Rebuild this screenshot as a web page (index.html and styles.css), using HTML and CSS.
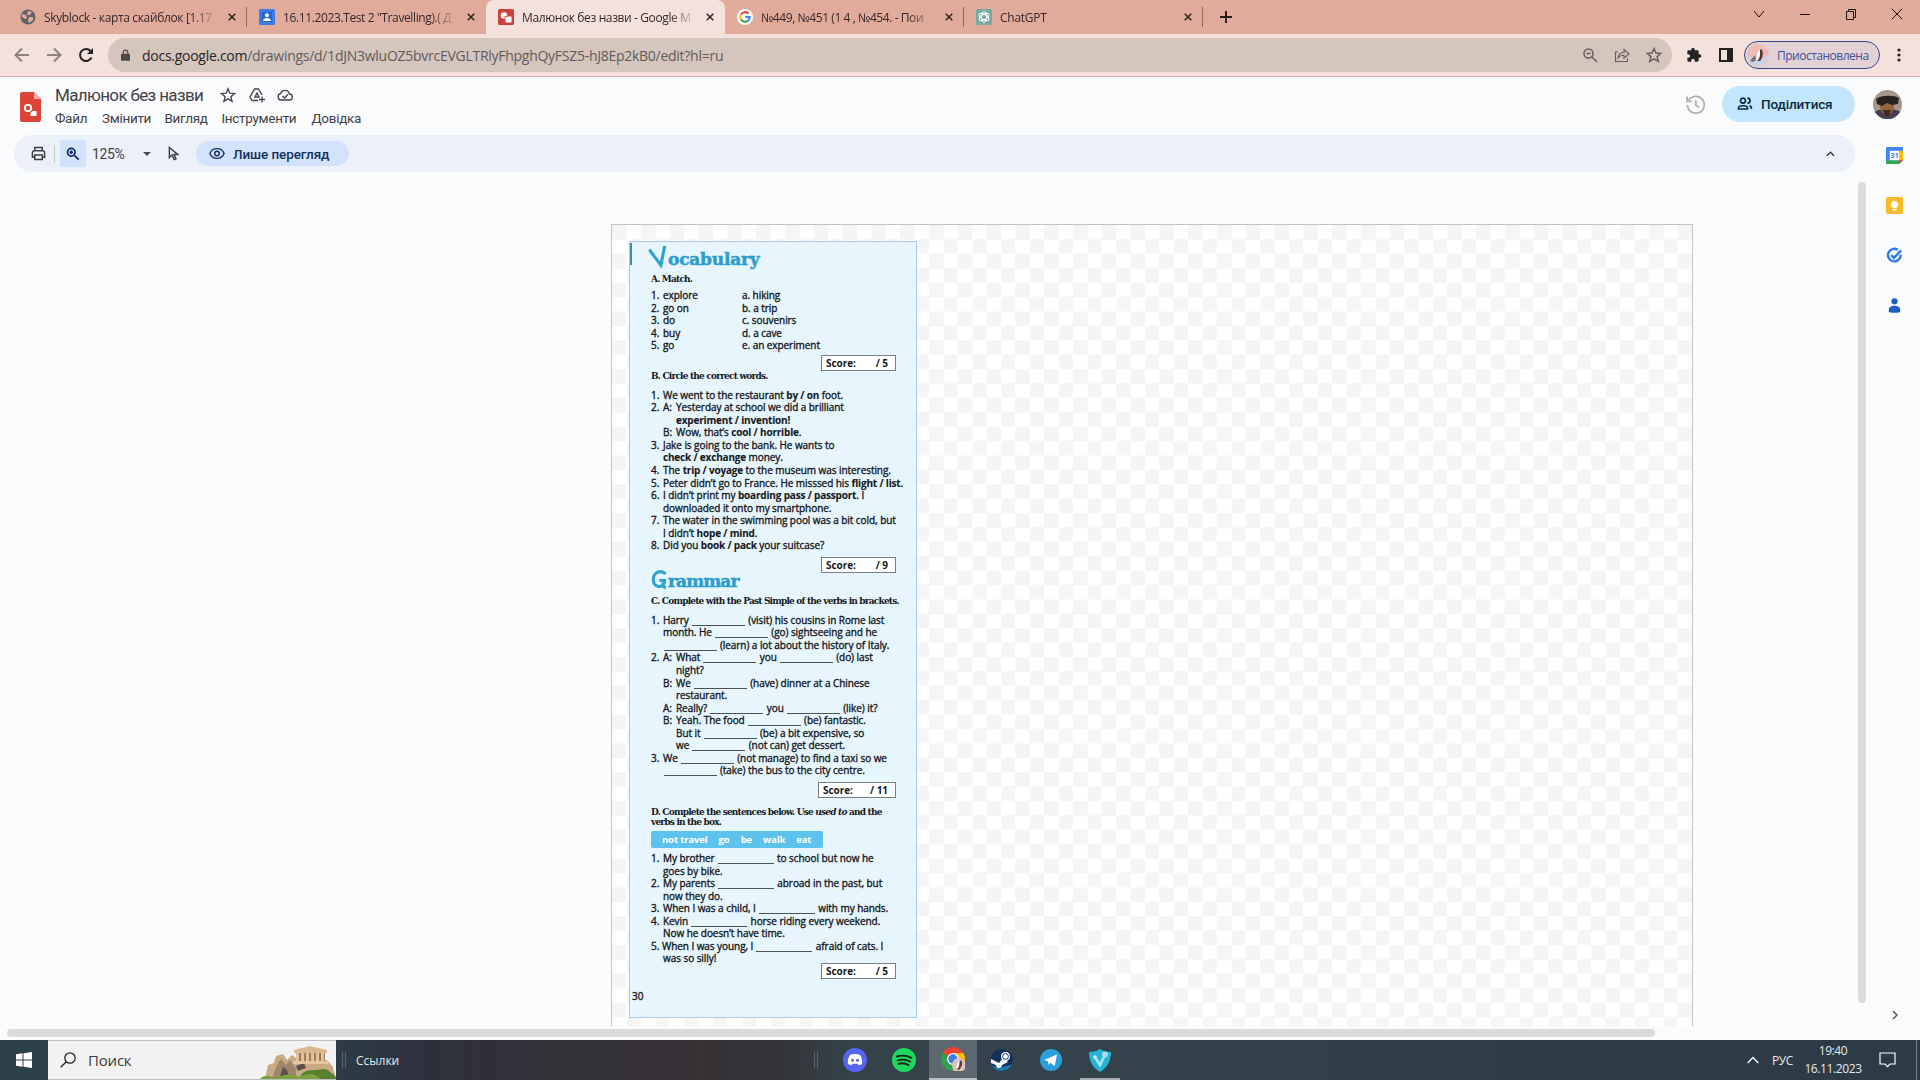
FILE: index.html
```
<!DOCTYPE html>
<html lang="uk">
<head>
    <meta charset="UTF-8">
    <title>Малюнок без назви - Google Малюнки</title>
    <link rel="stylesheet" href="styles.css">
</head>
<body>
    <!-- Browser tabs -->
    <div class="tabs">
        <div class="tab">
            <svg class="favicon" viewBox="0 0 16 16"><circle cx="8" cy="8" r="7.5" fill="#5f6368"/><path d="M2 5l4 1 1 3-2 1-3-2zM8 2l4 1-2 3-3 0zM9 8l4 0 0 3-4 3-1-3z" fill="#e1ab9b"/></svg>
            <span class="tab-title t1">Skyblock - карта скайблок [1.17</span>
            <svg class="close" viewBox="0 0 8 8"><path d="M.7.7l6.6 6.6M7.3.7L.7 7.3"/></svg>
        </div>
        <div class="tab no-sep">
            <svg class="favicon" viewBox="0 0 16 16"><rect width="16" height="16" rx="1.5" fill="#3b7de8"/><rect x="3" y="3" width="10" height="10" fill="#2465cf"/><circle cx="8" cy="6.2" r="2" fill="#fff"/><path d="M4 12c0-4 8-4 8 0z" fill="#fff"/></svg>
            <span class="tab-title t2">16.11.2023.Test 2 "Travelling).( Д</span>
            <svg class="close" viewBox="0 0 8 8"><path d="M.7.7l6.6 6.6M7.3.7L.7 7.3"/></svg>
        </div>
        <div class="tab active">
            <svg class="favicon" viewBox="0 0 16 16"><rect width="16" height="16" rx="1.5" fill="#d0403b"/><circle cx="6" cy="6.5" r="3.3" fill="#fff"/><rect x="7.5" y="7.5" width="6" height="6" fill="#fff"/><path d="M6 8h3v-2" fill="none" stroke="#d0403b"/></svg>
            <span class="tab-title t3">Малюнок без назви - Google М</span>
            <svg class="close" viewBox="0 0 8 8"><path d="M.7.7l6.6 6.6M7.3.7L.7 7.3"/></svg>
        </div>
        <div class="tab">
            <svg class="favicon" viewBox="0 0 16 16"><circle cx="8" cy="8" r="8" fill="#fff"/><g fill="none" stroke-width="2.1"><path d="M11.5 4.6A4.7 4.7 0 0 0 4 5.6" stroke="#ea4335"/><path d="M4 5.6a4.7 4.7 0 0 0 0 4.8" stroke="#fbbc05"/><path d="M4 10.4a4.7 4.7 0 0 0 7 1.3" stroke="#34a853"/><path d="M11 11.7c1.3-1 1.7-2.2 1.7-3.7H8.2" stroke="#4285f4"/></g></svg>
            <span class="tab-title t4">№449, №451 (1 4 , №454. - Пои</span>
            <svg class="close" viewBox="0 0 8 8"><path d="M.7.7l6.6 6.6M7.3.7L.7 7.3"/></svg>
        </div>
        <div class="tab">
            <svg class="favicon" viewBox="0 0 16 16"><rect width="16" height="16" rx="1.5" fill="#75a99c"/><g fill="none" stroke="#fff" stroke-width=".9"><ellipse cx="8" cy="8" rx="2.6" ry="5.5"/><ellipse cx="8" cy="8" rx="2.6" ry="5.5" transform="rotate(60 8 8)"/><ellipse cx="8" cy="8" rx="2.6" ry="5.5" transform="rotate(120 8 8)"/></g></svg>
            <span class="tab-title t5">ChatGPT</span>
            <svg class="close" viewBox="0 0 8 8"><path d="M.7.7l6.6 6.6M7.3.7L.7 7.3"/></svg>
        </div>
        <svg class="plus" viewBox="0 0 12 12"><path d="M6 0v12M0 6h12"/></svg>
        <div class="window-buttons">
            <svg viewBox="0 0 12 12"><path d="M1 3l5 6 5-6"/></svg>
            <svg viewBox="0 0 12 12"><path d="M1 6.5h10"/></svg>
            <svg viewBox="0 0 12 12"><path d="M1.500 3.500h7v8h-7zM3.500 3.500v-2h7v8h-2"/></svg>
            <svg viewBox="0 0 12 12"><path d="M.8.8l10.400 10.400M11.200.8L.8 11.200"/></svg>
        </div>
    </div>

    <!-- Address bar -->
    <div class="toolbar">
        <svg class="nav dim" viewBox="0 0 16 16"><path d="M15 8H2M8 1.500L1.500 8 8 14.500"/></svg>
        <svg class="nav dim" viewBox="0 0 16 16"><path d="M1 8h13M8 1.500L14.500 8 8 14.500"/></svg>
        <svg class="nav" viewBox="0 0 16 16"><path d="M13.500 10.500a6 6 0 1 1-1-6.500"/><path d="M15 1v6H9z" fill="#222" stroke="none"/></svg>
        <div class="omnibox">
            <svg class="lock" viewBox="0 0 10 13"><rect y="5" width="10" height="8" rx="1" fill="#4c4845"/><path d="M2.500 5V3.500a2.500 2.500 0 0 1 5 0V5" fill="none" stroke="#4c4845" stroke-width="1.400"/></svg>
            <span class="url"><b>docs.google.com</b>/drawings/d/1dJN3wluOZ5bvrcEVGLTRlyFhpghQyFSZ5-hJ8Ep2kB0/edit?hl=ru</span>
            <svg class="omni-icon" viewBox="0 0 16 16"><circle cx="6.500" cy="6.500" r="4.500"/><path d="M10 10l5 5M4.500 6.500h4"/></svg>
            <svg class="omni-icon thin" viewBox="0 0 16 16"><path d="M4 5H1.500v9.500h12V11M4 11c.5-4 3-5.500 6-5.500v-3L15 7l-5 4V8.300c-3 0-4.500.7-6 2.700z"/></svg>
            <svg class="omni-icon" viewBox="0 0 16 16"><path d="M8 1.500l2 4.500 4.800.4-3.700 3.200 1.200 4.800L8 11.800l-4.300 2.600 1.200-4.800L1.200 6.400 6 6z"/></svg>
        </div>
        <svg class="puzzle" viewBox="0 0 24 24"><path d="M20.500 11H19V7c0-1.100-.9-2-2-2h-4V3.500a2.500 2.500 0 0 0-5 0V5H4c-1.100 0-2 .9-2 2v3.800h1.500a2.700 2.700 0 0 1 0 5.400H2V20c0 1.100.9 2 2 2h3.800v-1.500a2.700 2.700 0 0 1 5.400 0V22H17c1.100 0 2-.9 2-2v-4h1.500a2.500 2.500 0 0 0 0-5z"/></svg>
        <svg class="panel" viewBox="0 0 14 14"><path d="M0 0h14v14H0zM2 2v10h6V2z" fill="#222" fill-rule="evenodd"/></svg>
        <div class="profile">
            <svg viewBox="0 0 22 22"><circle cx="11" cy="11" r="11" fill="#eebbb5"/><path d="M0 11a11 11 0 0 0 22 0c-6 3-14 6-22 0z" fill="#c9d3e2"/><path d="M3 17l5-6 1 5-3 2z" fill="#77716f"/><path d="M10 17c4-3 1-10 4-12 3 2 2 9-1 12z" fill="#4b3835"/><path d="M9 16c1-4 1-8 4-10 0 4 0 8-2 10z" fill="#fff"/></svg>
            <span>Приостановлена</span>
        </div>
        <svg class="dots" viewBox="0 0 4 14"><circle cx="2" cy="2" r="1.600"/><circle cx="2" cy="7" r="1.600"/><circle cx="2" cy="12" r="1.600"/></svg>
    </div>

    <!-- Document header -->
    <div class="doc-header">
        <svg class="doc-logo" viewBox="0 0 21 30"><path d="M2 0h12l7 7v21a2 2 0 0 1-2 2H2a2 2 0 0 1-2-2V2a2 2 0 0 1 2-2z" fill="#db4437"/><path d="M14 0l7 7h-7z" fill="#f2a8a1"/><circle cx="8" cy="16" r="3.200" fill="none" stroke="#fff" stroke-width="1.800"/><path d="M10.500 24v-3l2-2h4v5z" fill="#fff"/></svg>
        <div class="doc-info">
            <div class="doc-title">
                <h1>Малюнок без назви</h1>
                <svg viewBox="0 0 16 16"><path d="M8 1.800l1.800 4.400 4.700.4-3.600 3.100 1.100 4.600L8 11.800l-4 2.500 1.100-4.600-3.600-3.100 4.700-.4z"/></svg>
                <svg viewBox="0 0 16 16"><path d="M9 13.500H3.200L1 10l4.500-8h4L13 8M6 10l2-4 2 4zM13 9.500v6M10 12.500h6"/></svg>
                <svg viewBox="0 0 16 16"><path d="M4 13a3.300 3.300 0 0 1-.3-6.500 4.500 4.500 0 0 1 8.700.5 3 3 0 0 1 0 6zM5.500 9l2 2 3.300-3.500"/></svg>
            </div>
            <div class="menu">
                <span class="m1">Файл</span><span class="m2">Змінити</span><span class="m3">Вигляд</span><span class="m4">Інструменти</span><span>Довідка</span>
            </div>
        </div>
        <svg class="history" viewBox="0 0 18 18"><path d="M2.500 5a8 8 0 1 1-1.200 4.500M1 1.500V6h4.500M9.300 5v4.500l3.200 2.500"/></svg>
        <div class="share">
            <svg viewBox="0 0 16 16"><path d="M6 2.200a2.500 2.500 0 1 0 .01 0M1.500 13v-1c0-3 9-3 9 0v1zM10.500 2.200a2.500 2.500 0 0 1 0 5M12.500 9.500c2 .8 2 2 2 3.500" /></svg>
            <span>Поділитися</span>
        </div>
        <svg class="avatar" viewBox="0 0 29 29"><circle cx="14.500" cy="14.500" r="14.500" fill="#a69789"/><path d="M2 22c3-4 22-4 25 0a14.500 14.500 0 0 1-25 0z" fill="#453f52"/><ellipse cx="14" cy="16" rx="7" ry="9" fill="#96633f"/><path d="M3 9c5-4 18-4 23-1l-1 6-6 1-5-2-5 3-5-2z" fill="#28231f"/><path d="M10 20h8l-2 6h-4z" fill="#3a2a23"/></svg>
    </div>

    <div class="workspace">
        <div class="main">
            <div class="tools">
                <svg class="print" viewBox="0 0 16 16"><path d="M4 5V1.500h8V5M4 12H1.500V7c0-1 .7-2 2-2h9c1.300 0 2 1 2 2v5H12M4 9.500h8v5H4z"/></svg>
                <div class="divider"></div>
                <div class="zoom-tool"><svg viewBox="0 0 16 16"><circle cx="6" cy="6" r="4.300"/><path d="M9.500 9.500l5 5M4 6h4M6 4v4"/></svg></div>
                <span class="percent">125%</span>
                <div class="caret"></div>
                <svg class="cursor" viewBox="0 0 12 16"><path d="M1.500 1.500v11l3-2.800 2.200 5 2-.9-2.200-4.800H10.500z"/></svg>
                <div class="view-only">
                    <svg viewBox="0 0 18 14"><path d="M1 7c3-7.300 13-7.300 16 0-3 7.300-13 7.300-16 0z"/><circle cx="9" cy="7" r="2.600"/></svg>
                    <span>Лише перегляд</span>
                </div>
                <svg class="collapse" viewBox="0 0 10 6"><path d="M1 5l4-4 4 4"/></svg>
            </div>
            <div class="canvas-row">
                <div class="canvas">
                    <div class="sheet">
                        <div class="heading vocab"><svg viewBox="0 0 20 24"><path d="M1 5l12 16L17 1" /></svg><span>ocabulary</span></div>
                        <h4 class="a">A. Match.</h4>
                        <ol class="match">
                            <li><i>1.</i><span>explore</span><em>a. hiking</em></li>
                            <li><i>2.</i><span>go on</span><em>b. a trip</em></li>
                            <li><i>3.</i><span>do</span><em>c. souvenirs</em></li>
                            <li><i>4.</i><span>buy</span><em>d. a cave</em></li>
                            <li><i>5.</i><span>go</span><em>e. an experiment</em></li>
                        </ol>
                        <div class="score">Score:<span>/ 5</span></div>
                        <h4 class="b">B. Circle the correct words.</h4>
                        <ol>
                            <li><i>1.</i>We went to the restaurant <b>by / on</b> foot.</li>
                            <li><i>2.</i><u>A:</u>Yesterday at school we did a brilliant</li>
                            <li><i></i><u></u><b>experiment / invention!</b></li>
                            <li><i></i><u>B:</u>Wow, that’s <b>cool / horrible</b>.</li>
                            <li><i>3.</i>Jake is going to the bank. He wants to</li>
                            <li><i></i><b>check / exchange</b> money.</li>
                            <li><i>4.</i>The <b>trip / voyage</b> to the museum was interesting.</li>
                            <li><i>5.</i>Peter didn’t go to France. He misssed his <b>flight / list</b>.</li>
                            <li><i>6.</i>I didn’t print my <b>boarding pass / passport</b>. I</li>
                            <li><i></i>downloaded it onto my smartphone.</li>
                            <li><i>7.</i>The water in the swimming pool was a bit cold, but</li>
                            <li><i></i>I didn’t <b>hope / mind</b>.</li>
                            <li><i>8.</i>Did you <b>book / pack</b> your suitcase?</li>
                        </ol>
                        <div class="score s2">Score:<span>/ 9</span></div>
                        <div class="heading gram"><svg viewBox="0 0 17 21"><path d="M15 4C9-1 2 3 2 10s6 9 10 6c2-1.500 2-3 2-5H8.500M12 13c0 3 1 5 3 6" /></svg><span>rammar</span></div>
                        <h4 class="c">C. Complete with the Past Simple of the verbs in brackets.</h4>
                        <ol>
                            <li><i>1.</i>Harry <s></s> (visit) his cousins in Rome last</li>
                            <li><i></i>month. He <s></s> (go) sightseeing and he</li>
                            <li><i></i><s></s> (learn) a lot about the history of Italy.</li>
                            <li><i>2.</i><u>A:</u>What <s></s> you <s></s> (do) last</li>
                            <li><i></i><u></u>night?</li>
                            <li><i></i><u>B:</u>We <s></s> (have) dinner at a Chinese</li>
                            <li><i></i><u></u>restaurant.</li>
                            <li><i></i><u>A:</u>Really? <s></s> you <s></s> (like) it?</li>
                            <li><i></i><u>B:</u>Yeah. The food <s></s> (be) fantastic.</li>
                            <li><i></i><u></u>But it <s></s> (be) a bit expensive, so</li>
                            <li><i></i><u></u>we <s></s> (not can) get dessert.</li>
                            <li><i>3.</i>We <s></s> (not manage) to find a taxi so we</li>
                            <li><i></i><s></s> (take) the bus to the city centre.</li>
                        </ol>
                        <div class="score s3">Score:<span>/ 11</span></div>
                        <h4 class="d">D. Complete the sentences below. Use <em>used to</em> and the<br>verbs in the box.</h4>
                        <div class="words"><span>not travel</span><span>go</span><span>be</span><span>walk</span><span>eat</span></div>
                        <ol class="wide">
                            <li><i>1.</i>My brother <s></s> to school but now he</li>
                            <li><i></i>goes by bike.</li>
                            <li><i>2.</i>My parents <s></s> abroad in the past, but</li>
                            <li><i></i>now they do.</li>
                            <li><i>3.</i>When I was a child, I <s></s> with my hands.</li>
                            <li><i>4.</i>Kevin <s></s> horse riding every weekend.</li>
                            <li><i></i>Now he doesn’t have time.</li>
                            <li><i class="tight">5.</i>When I was young, I <s></s> afraid of cats. I</li>
                            <li><i></i>was so silly!</li>
                        </ol>
                        <div class="score s4">Score:<span>/ 5</span></div>
                        <div class="page-number">30</div>
                    </div>
                </div>
                <div class="v-scroll"></div>
            </div>
            <div class="h-scroll"></div>
        </div>
        <div class="side">
            <svg viewBox="0 0 18 18"><path d="M1 0h16a1 1 0 0 1 1 1v13l-4 4H1a1 1 0 0 1-1-1V1a1 1 0 0 1 1-1z" fill="#4285f4"/><path d="M14 4h4v10h-4z" fill="#fbbc04"/><path d="M0 14h14v4H1a1 1 0 0 1-1-1z" fill="#34a853"/><path d="M14 14h4l-4 4z" fill="#ea4335"/><path d="M4 4h10v10H4z" fill="#fff"/><text x="9" y="12" text-anchor="middle">31</text></svg>
            <svg viewBox="0 0 18 18"><rect width="18" height="18" rx="2" fill="#f5ba2b"/><circle cx="9" cy="8" r="3.800" fill="#fff"/><path d="M7 12.500h4v1.800H7z" fill="#fff"/></svg>
            <svg viewBox="0 0 18 18"><path d="M15.500 8a6.700 6.700 0 1 1-3-5M5.500 8.500l3 3L16 3.500" fill="none" stroke="#2d7be5" stroke-width="2.600"/></svg>
            <svg viewBox="0 0 18 18"><circle cx="9" cy="4.500" r="3.300" fill="#1a5fc4"/><path d="M3 16v-3c0-5 12-5 12 0v3c0 1-12 1-12 0z" fill="#1a5fc4"/></svg>
            <svg class="expand" viewBox="0 0 6 10"><path d="M1 1l4 4-4 4"/></svg>
        </div>
    </div>

    <!-- Windows taskbar -->
    <div class="taskbar">
        <div class="start"><svg viewBox="0 0 16 16"><path d="M0 2.200L6.500 1.300V7.500H0zM7.500 1.200L16 0v7.500H7.500zM0 8.500h6.500v6.200L0 13.800zM7.500 8.500H16V16l-8.500-1.200z"/></svg></div>
        <div class="search">
            <svg class="glass" viewBox="0 0 16 16"><circle cx="10" cy="6" r="5.200"/><path d="M6.300 9.700L.7 15.300"/></svg>
            <span>Поиск</span>
            <svg class="ruins" viewBox="0 0 76 33"><path d="M5 33l3-14 6-2 2-7 7-2 4 6 5-5 5 4 30 1 6 7 3 12z" fill="#c9aa84"/><path d="M12 33l4-12 5-8 5 6 4-5 6 9v10z" fill="#9d866c"/><path d="M20 30l3-9 4 3 2 6zM36 20l8-3 2 5-8 3z" fill="#5e5148"/><path d="M36 7h29v9H36z" fill="#9a7a58"/><path d="M34 4L50 0l17 4v3H34z" fill="#d8b992"/><path d="M36 7h3v9h-3zM41 7h3v9h-3zM46 7h3v9h-3zM51 7h3v9h-3zM56 7h3v9h-3zM61 7h3v9h-3z" fill="#e0c39b"/><path d="M33 15h35v3H33z" fill="#e2c7a0"/><path d="M40 33c0-6 6-9 13-9 8 0 12-3 16 1s7 3 7 8z" fill="#57802f"/><path d="M0 33c5-6 12-2 17-1 8-5 16-4 23-1 9-5 15-3 21 2z" fill="#7ba13d"/></svg>
        </div>
        <div class="grip"></div>
        <span class="links">Ссылки</span>
        <div class="grip g2"></div>
        <div class="app"><svg viewBox="0 0 24 24"><circle cx="12" cy="12" r="12" fill="#5865f2"/><path d="M7 7c3-1.200 7-1.200 10 0 2 3 2.500 6 2 9-1 .8-2.500 1.200-3.500 1.200l-.8-1.500h-5.400l-.8 1.500C7.500 17.200 6 16.800 5 16c-.5-3 0-6 2-9z" fill="#fff"/><circle cx="9.500" cy="12.300" r="1.500" fill="#5865f2"/><circle cx="14.500" cy="12.300" r="1.500" fill="#5865f2"/></svg></div>
        <div class="app"><svg viewBox="0 0 24 24"><circle cx="12" cy="12" r="12" fill="#1ed760"/><path d="M5 8.500c5-1.500 10-1 14.500 1.300M5.700 12.300c4.300-1.200 8.500-.8 12.300 1.200M6.300 15.800c3.700-.9 7-.6 10.200 1.200" fill="none" stroke="#14251c" stroke-width="1.900" stroke-linecap="round"/></svg></div>
        <div class="app current"><svg viewBox="0 0 24 24"><path d="M12 12L1.600 6A12 12 0 0 1 22.400 6z" fill="#ea4335"/><path d="M12 12L1.600 6A12 12 0 0 0 12 24z" fill="#2fa04f"/><path d="M12 12V6h10.400A12 12 0 0 1 12 24z" fill="#fbbc05"/><circle cx="12" cy="12" r="6" fill="#fff"/><circle cx="12" cy="12" r="4.700" fill="#3b7ddd"/><circle cx="18" cy="18" r="7" fill="#ddc0ba"/><path d="M16 22c4-2 1-7 4-9 2 3 1 7-2 10z" fill="#4b3835"/><path d="M15 21c1-3 1-5 3-7 0 4 0 5-1 7z" fill="#fff"/></svg></div>
        <div class="app"><svg viewBox="0 0 24 24"><circle cx="12" cy="12" r="11" fill="#12305e"/><path d="M2 17a11 11 0 0 0 20-1c-4 2-14 5-20 1z" fill="#1c78ad"/><path d="M1 11l8 4 4-5 5 4-6 3c0 4-6 4-6 0l-5-2z" fill="#fff"/><circle cx="15.500" cy="8.500" r="4.500" fill="#fff"/><circle cx="15.500" cy="8.500" r="2.900" fill="#fff" stroke="#12305e"/></svg></div>
        <div class="app"><svg viewBox="0 0 24 24"><circle cx="12" cy="12" r="11" fill="#2a9fd9"/><path d="M5 12l13-5.500-2.300 11.500-4.500-3.300L9.500 17l-.7-4z" fill="#fff"/></svg></div>
        <div class="app"><svg viewBox="0 0 24 24"><path d="M1 4c5 0 8-1 11-3 3 2 6 3 11 3 0 9-4 16-11 20C5 20 1 13 1 4z" fill="#25b4d6"/><path d="M7 9l5 8 5-10" fill="none" stroke="#a5e6f2" stroke-width="2.600" stroke-linecap="round"/><circle cx="7" cy="9" r="1.800" fill="#c9f2fa"/><circle cx="17" cy="6.500" r="3" fill="#9de3f0"/></svg><div class="underline"></div></div>
        <div class="tray">
            <svg class="up" viewBox="0 0 12 8"><path d="M.7 7L6 1.500 11.300 7"/></svg>
            <span class="lang">РУС</span>
            <div class="clock"><span>19:40</span><span>16.11.2023</span></div>
            <svg class="notif" viewBox="0 0 17 16"><path d="M1 1h15v11h-5l-2.500 2.700L6 12H1z"/></svg>
        </div>
    </div>
</body>
</html>
```
FILE: styles.css
```
* {
    box-sizing: border-box;
}
body {
    margin: 0;
    width: 1920px;
    height: 1080px;
    overflow: hidden;
    display: flex;
    flex-direction: column;
    font-family: "Open Sans", "Noto Sans", sans-serif;
    background-color: #fafbfd;
    color: #3f4246;
}
svg {
    display: block;
    flex: none;
    fill: none;
}
span {
    white-space: nowrap;
}

/* Tabs */
.tabs {
    height: 34px;
    flex: none;
    display: flex;
    align-items: center;
    padding-left: 8px;
    background-color: #e1ab9b;
}
.tab {
    width: 239px;
    height: 34px;
    display: flex;
    align-items: center;
    padding: 0 11px 0 12px;
    position: relative;
}
.tab::after {
    content: "";
    position: absolute;
    right: 0;
    top: 7px;
    width: 1px;
    height: 20px;
    background-color: #94685f;
}
.no-sep::after, .active::after {
    display: none;
}
.active {
    background-color: #f4e1db;
    border-radius: 8px 8px 0 0;
}
.favicon {
    width: 16px;
    height: 16px;
    margin-right: 8px;
}
.tab-title {
    width: 172px;
    overflow: hidden;
    font-size: 12px;
    color: #37272a;
    -webkit-mask-image: linear-gradient(to right, #000 148px, transparent 174px);
    mask-image: linear-gradient(to right, #000 148px, transparent 174px);
}
.t1 { letter-spacing: -0.35px; }
.t2 { letter-spacing: -0.38px; }
.t3 { letter-spacing: -0.38px; }
.t4 { letter-spacing: -0.42px; }
.t5 { letter-spacing: -0.25px; }
.close {
    width: 8px;
    height: 8px;
    margin-left: auto;
    stroke: #32211f;
    stroke-width: 1.5;
}
.plus {
    width: 12px;
    height: 12px;
    margin-left: 17px;
    stroke: #2b1b18;
    stroke-width: 2;
}
.window-buttons {
    margin-left: auto;
    display: flex;
    gap: 34px;
    padding: 0 17px 6px 0;
}
.window-buttons svg {
    width: 12px;
    height: 12px;
    stroke: #1e1210;
}

/* Address bar */
.toolbar {
    height: 43px;
    flex: none;
    display: flex;
    align-items: center;
    padding-left: 14px;
    background-color: #f4e1db;
    border-bottom: 1px solid #c9aeab;
}
.nav {
    width: 16px;
    height: 16px;
    margin-right: 16px;
    stroke: #222;
    stroke-width: 2;
}
.dim {
    stroke: #8f8380;
}
.omnibox {
    width: 1564px;
    height: 34px;
    margin-left: -2px;
    display: flex;
    align-items: center;
    gap: 16px;
    padding: 0 10px 0 13px;
    border-radius: 17px;
    background-color: #d4c5bd;
}
.lock {
    width: 9px;
    height: 12px;
}
.url {
    margin: 0 auto 0 -4px;
    font-size: 14px;
    letter-spacing: -0.27px;
    color: #625b5b;
}
.url b {
    font-weight: normal;
    color: #292425;
}
.omni-icon {
    width: 16px;
    height: 16px;
    stroke: #66605f;
    stroke-width: 1.5;
}
.thin {
    stroke-width: 1.1;
}
.puzzle {
    width: 16px;
    height: 16px;
    margin-left: 14px;
    fill: #222;
}
.panel {
    width: 14px;
    height: 14px;
    margin-left: 17px;
}
.profile {
    width: 136px;
    height: 28px;
    margin-left: 11px;
    display: flex;
    align-items: center;
    gap: 8px;
    padding-left: 2px;
    border: 1px solid #33468c;
    border-radius: 14px;
    background-color: #e2d2d6;
    color: #41529a;
    font-size: 12px;
    letter-spacing: -0.5px;
}
.profile svg {
    width: 22px;
    height: 22px;
}
.dots {
    width: 4px;
    height: 14px;
    margin-left: 17px;
    fill: #222;
}

/* Document header */
.doc-header {
    height: 58px;
    flex: none;
    display: flex;
    align-items: center;
    padding: 0 18px 4px 20px;
}
.doc-logo {
    width: 21px;
    height: 30px;
    margin-top: 6px;
}
.doc-info {
    margin: 0 auto 0 14px;
}
.doc-title {
    display: flex;
    align-items: center;
    height: 27px;
}
.doc-title h1 {
    width: 165px;
    margin: 0;
    white-space: nowrap;
    font: 400 17px Roboto, sans-serif;
    letter-spacing: -0.65px;
}
.doc-title svg {
    width: 16px;
    height: 16px;
    margin-right: 12.5px;
    stroke: #45484c;
    stroke-width: 1.4;
}
.menu {
    display: flex;
    height: 18px;
    align-items: center;
    font: 13.5px Roboto, sans-serif;
    letter-spacing: -0.3px;
}
.m1 { width: 47px; }
.m2 { width: 62.5px; }
.m3 { width: 57px; }
.m4 { width: 90px; }
.history {
    width: 19px;
    height: 19px;
    stroke: #aeb0b3;
    stroke-width: 1.7;
}
.share {
    width: 133px;
    height: 36px;
    margin: 0 18px 0 17px;
    display: flex;
    align-items: center;
    gap: 8px;
    padding-left: 15px;
    border-radius: 18px;
    background-color: #c2e7fd;
    color: #0a2740;
    font: 500 13.5px Roboto, sans-serif;
    letter-spacing: -0.15px;
}
.share svg {
    width: 16px;
    height: 16px;
    stroke: #0a2740;
    stroke-width: 1.7;
}
.avatar {
    width: 29px;
    height: 29px;
}

/* Workspace */
.workspace {
    height: 905px;
    flex: none;
    display: flex;
}
.main {
    width: 1870px;
}
.tools {
    height: 37px;
    width: 1841px;
    margin-left: 14px;
    display: flex;
    align-items: center;
    padding: 0 20px 0 17px;
    border-radius: 18px;
    background-color: #ecf0f9;
}
.tools svg {
    stroke: #3c4043;
    stroke-width: 1.6;
}
.print {
    width: 15px;
    height: 15px;
}
.divider {
    width: 1px;
    height: 18px;
    margin: 0 5px 0 8px;
    background-color: #c5c8cf;
}
.zoom-tool {
    width: 26px;
    height: 27px;
    display: flex;
    align-items: center;
    justify-content: center;
    border-radius: 2px;
    background-color: #d3e2fb;
}
.zoom-tool svg {
    width: 14px;
    height: 14px;
    stroke: #0b2a5b;
    stroke-width: 2;
}
.percent {
    width: 51px;
    margin-left: 6px;
    font: 14px Roboto, sans-serif;
    letter-spacing: -0.4px;
}
.caret {
    border: 4px solid transparent;
    border-top-color: #4a4d51;
    border-bottom: 0;
}
.cursor {
    width: 11px;
    height: 15px;
    margin-left: 17px;
}
.view-only {
    width: 153px;
    height: 25px;
    margin-left: 17px;
    display: flex;
    align-items: center;
    gap: 8px;
    padding-left: 13px;
    border-radius: 13px;
    background-color: #d3e2fb;
    color: #12305e;
    font: 500 13.5px Roboto, sans-serif;
    letter-spacing: -0.1px;
}
.tools .view-only svg {
    width: 16px;
    height: 13px;
    stroke: #12305e;
}
.collapse {
    width: 9px;
    height: 6px;
    margin-left: auto;
}
.canvas-row {
    height: 857px;
    padding: 10px 4px 0 611px;
    display: flex;
    justify-content: space-between;
}
.canvas {
    width: 1082px;
    height: 802px;
    margin-top: 42px;
    overflow: hidden;
    border: 1px solid #c3c4c7;
    border-bottom: 0;
    padding: 16px 0 0 17px;
    background: conic-gradient(#fff 25%, #f5f5f6 0 50%, #fff 0 75%, #f5f5f6 0) 0 0 / 28.8px 28.8px;
}
.v-scroll {
    width: 8px;
    height: 821px;
    border-radius: 4px;
    background-color: #dadbdd;
}
.h-scroll {
    width: 1648px;
    height: 8px;
    margin-left: 7px;
    border-radius: 4px;
    background-color: #dadbdd;
}

/* Worksheet */
.sheet {
    width: 288px;
    height: 777px;
    border: 1px solid #adc8ea;
    padding: 3px 20px 0 21px;
    background: linear-gradient(#3d8ab8, #3d8ab8) 0 1px / 2px 22px no-repeat #e7f5fd;
    font: 10px/12.55px "Open Sans", sans-serif;
    letter-spacing: -0.06px;
    color: #15191d;
    -webkit-text-stroke: 0.35px #15191d;
}
.sheet li b {
    letter-spacing: -0.18px;
    -webkit-text-stroke: 0.1px #15191d;
}
.heading {
    display: flex;
    align-items: flex-end;
    font: bold 17px/18px "DejaVu Serif", serif;
    letter-spacing: -0.2px;
    color: #2c9dca;
    -webkit-text-stroke: 0.5px #2c9dca;
}
.heading svg {
    fill: none;
    stroke: #2ba3cf;
    stroke-width: 3.2;
}
.vocab {
    height: 23px;
    margin-left: -3px;
}
.vocab svg {
    width: 20px;
    height: 23px;
}
.gram {
    height: 21px;
    margin-top: -4px;
    letter-spacing: -0.9px;
}
.gram svg {
    width: 17px;
    height: 20px;
}
.sheet h4 {
    margin: 0;
    white-space: nowrap;
    font: bold 9px/10px "DejaVu Serif", serif;
    letter-spacing: -0.8px;
    -webkit-text-stroke: 0;
}
.sheet h4.a { margin: 6px 0 5px; }
.sheet h4.b { margin: 0 0 8px; }
.sheet h4.c { margin: 6px 0 8px; }
.sheet h4.d { margin: 9px 0 4px; }
.sheet ol {
    margin: 0;
    padding: 0;
    list-style: none;
}
.sheet li {
    height: 12.55px;
    display: block;
    white-space: nowrap;
}
.sheet i, .sheet u {
    display: inline-block;
    width: 12px;
    font-style: normal;
    text-decoration: none;
}
.sheet u {
    width: 13px;
}
.sheet i.tight {
    width: 11px;
}
.sheet s {
    display: inline-block;
    width: 53px;
    height: 10px;
    margin: 0 0.8px 0 0.6px;
    vertical-align: -2px;
    border-bottom: 1px solid #4a5157;
}
.sheet .wide s {
    width: 56px;
}
.match span {
    display: inline-block;
    width: 79px;
}
.match em {
    font-style: normal;
}
.score {
    width: 75px;
    height: 16px;
    margin: 3px 0 0 auto;
    display: flex;
    justify-content: space-between;
    padding: 0 7px 0 4px;
    border: 1px solid #777d81;
    background-color: #fff;
    font-weight: bold;
    line-height: 14px;
    -webkit-text-stroke: 0;
}
.s2 { margin-top: 5px; }
.s3 { width: 78px; margin-top: 5px; }
.s4 { margin-top: -2px; }
.words {
    width: 172px;
    height: 17px;
    margin-bottom: 4px;
    display: flex;
    gap: 11px;
    padding-left: 11px;
    border-radius: 2px;
    background-color: #5ec3ec;
    color: #fff;
    font: bold 9.5px/17px "Open Sans", sans-serif;
    letter-spacing: -0.12px;
    -webkit-text-stroke: 0;
}
.page-number {
    margin: 11px 0 0 -19px;
}

/* Side panel */
.side {
    width: 50px;
    display: flex;
    flex-direction: column;
    align-items: center;
    gap: 33px;
    padding: 12px 1px 0 0;
}
.side svg {
    width: 17px;
    height: 17px;
}
.side text {
    font: bold 8px "Open Sans", sans-serif;
    fill: #4285f4;
}
.side .expand {
    width: 6px;
    height: 10px;
    margin: auto 0 20px;
    stroke: #55585c;
    stroke-width: 1.5;
}

/* Taskbar */
.taskbar {
    height: 40px;
    flex: none;
    display: flex;
    align-items: center;
    background: linear-gradient(to right, #2d3c46 336px, #2d303c 430px, #322f38 520px, #353135 700px, #343438 780px, #35424a 850px, #34424b 1150px, #2e3d48 1500px, #2c3b45);
    color: #e6e9eb;
}
.start {
    width: 48px;
    height: 40px;
    display: flex;
    align-items: center;
    justify-content: center;
    background-color: #2c414a;
}
.start svg {
    width: 16px;
    height: 16px;
    fill: #fff;
}
.search {
    width: 288px;
    height: 40px;
    display: flex;
    align-items: center;
    padding-left: 12px;
    border: 1px solid #bcbfc1;
    border-width: 1px 0;
    background-color: #f2f2f2;
    color: #3b3b3b;
    font-size: 15px;
    letter-spacing: -0.2px;
}
.glass {
    width: 16px;
    height: 16px;
    margin-right: 12px;
    stroke: #222;
    stroke-width: 1.3;
}
.ruins {
    width: 76px;
    height: 33px;
    margin: 5px 0 0 auto;
}
.grip {
    width: 4px;
    height: 16px;
    margin: 0 10px 0 6px;
    border: 1px solid #59636b;
    border-width: 0 1px;
}
.links {
    width: 458px;
    font-size: 12px;
}
.g2 {
    margin: 0 13px 0 0;
}
.app {
    width: 48px;
    height: 40px;
    margin-right: 1px;
    display: flex;
    align-items: center;
    justify-content: center;
    position: relative;
}
.app svg {
    width: 24px;
    height: 24px;
}
.current {
    background-color: #5b6870;
    border-bottom: 2px solid #b9bfc2;
}
.underline {
    position: absolute;
    left: 4px;
    bottom: 0;
    width: 40px;
    height: 2px;
    background-color: #a8aeb2;
}
.tray {
    height: 40px;
    margin-left: auto;
    display: flex;
    align-items: center;
    padding-right: 20px;
    margin-right: 3px;
    border-right: 1px solid #75808a;
    font-size: 12px;
}
.up {
    width: 12px;
    height: 8px;
    margin-right: 13px;
    stroke: #fff;
    stroke-width: 1.3;
}
.lang {
    width: 22px;
    letter-spacing: -0.4px;
}
.clock {
    width: 54px;
    margin: 0 19px 0 12px;
    display: flex;
    flex-direction: column;
    align-items: center;
    line-height: 18px;
    letter-spacing: -0.4px;
}
.notif {
    width: 17px;
    height: 16px;
    stroke: #fff;
    stroke-width: 1.2;
}
```
